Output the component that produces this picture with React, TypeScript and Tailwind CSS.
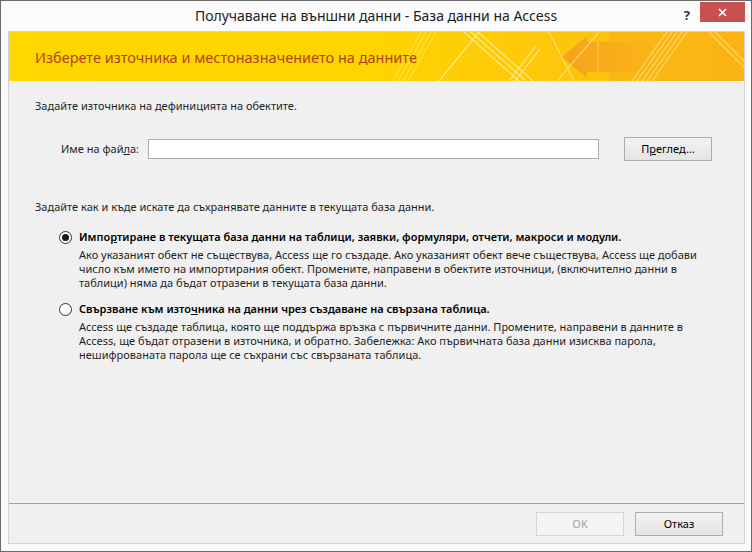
import React from "react";

const font = { fontFamily: '"Noto Sans", "Open Sans", sans-serif' };

function Banner() {
  return (
    <div className="relative h-[49px] overflow-hidden bg-gradient-to-r from-[#ffd800] via-[#ffd400] to-[#fbb813]">
      <svg
        className="absolute inset-0 h-full w-full"
        viewBox="0 0 735 49"
        preserveAspectRatio="none"
      >
        <defs>
          <linearGradient id="arrowFill" x1="0" x2="1" y1="0" y2="0">
            <stop offset="0" stopColor="#f7a21b" />
            <stop offset="1" stopColor="#fab41a" />
          </linearGradient>
        </defs>
        {/* orange band on the right */}
        <polygon points="600,0 735,0 735,49 600,49" fill="#fbb217" opacity="0.7" />
        {/* arrow */}
        <polygon points="553,25 578,4 578,10 643,10 643,40 578,40 578,46" fill="url(#arrowFill)" />
        <rect x="588" y="10" width="2" height="30" fill="#fdc830" opacity="0.7" />
        {/* light stripes */}
        <g stroke="#fff4a0" strokeWidth="1" opacity="0.55">
          <line x1="384" y1="49" x2="412" y2="0" />
          <line x1="389" y1="49" x2="417" y2="0" />
          <line x1="394" y1="49" x2="422" y2="0" />
          <line x1="399" y1="49" x2="427" y2="0" />
        </g>
        <g stroke="#fff6c0" strokeWidth="1.2" opacity="0.75">
          <line x1="455" y1="0" x2="510" y2="49" />
          <line x1="462" y1="0" x2="517" y2="49" />
          <line x1="469" y1="0" x2="524" y2="49" />
          <line x1="430" y1="49" x2="470" y2="0" />
          <line x1="500" y1="49" x2="527" y2="14" />
          <line x1="506" y1="49" x2="531" y2="17" />
        </g>
        <g stroke="#fff2a0" strokeWidth="1.2" opacity="0.6">
          <line x1="540" y1="0" x2="565" y2="49" />
          <line x1="548" y1="49" x2="590" y2="0" />
          <line x1="623" y1="49" x2="658" y2="0" />
          <line x1="628" y1="49" x2="663" y2="0" />
          <line x1="633" y1="49" x2="668" y2="0" />
          <line x1="638" y1="49" x2="673" y2="0" />
          <line x1="643" y1="49" x2="678" y2="0" />
          <line x1="700" y1="0" x2="735" y2="35" />
          <line x1="706" y1="0" x2="735" y2="29" />
        </g>
      </svg>
      <div className="relative flex h-full items-center pl-[26px] text-[14.5px] text-[#b3430d]">
        Изберете източника и местоназначението на данните
      </div>
    </div>
  );
}

function Radio({ checked }: { checked?: boolean }) {
  return (
    <span className="flex h-[13px] w-[13px] shrink-0 items-center justify-center rounded-full border border-[#333] bg-white">
      {checked && <span className="h-[7px] w-[7px] rounded-full bg-[#1a1a1a]" />}
    </span>
  );
}

function Option({
  checked,
  label,
  lines,
}: {
  checked?: boolean;
  label: React.ReactNode;
  lines: string[];
}) {
  return (
    <div className="pl-[24px]">
      <div className="flex items-center gap-[7px]">
        <Radio checked={checked} />
        <span className="font-semibold text-[#000]">{label}</span>
      </div>
      <div className="mt-[4px] pl-[20px]">
        {lines.map((l) => (
          <div key={l} className="whitespace-nowrap">
            {l}
          </div>
        ))}
      </div>
    </div>
  );
}

export default function App() {
  return (
    <div
      style={font}
      className="flex h-[552px] w-[752px] flex-col border border-[#6a6a6a] bg-[#fbfbfb] text-[11px] leading-[14px] text-[#1e1e1e]"
    >
      {/* Title bar */}
      <div className="relative flex h-[30px] shrink-0 items-center justify-center">
        <span className="text-[14px] text-[#222]">
          Получаване на външни данни - База данни на Access
        </span>
        <div className="absolute right-[6px] top-[1px] flex items-start">
          <span className="mr-[10px] mt-[6px] text-[13px] font-bold text-[#333]">?</span>
          <button className="flex h-[20px] w-[45px] items-center justify-center bg-[#c75050] text-white">
            <svg width="9" height="9" viewBox="0 0 9 9">
              <path d="M1 1 L8 8 M8 1 L1 8" stroke="#fff" strokeWidth="1.6" />
            </svg>
          </button>
        </div>
      </div>

      {/* Dialog body */}
      <div className="mb-[7px] ml-[7px] mr-[6px] flex flex-1 flex-col border border-[#d3d3d3] bg-[#f0f0f0]">
        <Banner />

        <div className="flex flex-1 flex-col pl-[26px] pr-[32px]">
          <div className="mt-[18px]">Задайте източника на дефиницията на обектите.</div>

          <div className="mt-[24px] flex items-center pl-[26px]">
            <span className="w-[87px]">
              Име на фай<span className="underline">л</span>а:
            </span>
            <div className="h-[20px] w-[451px] border border-[#abadb3] bg-white" />
            <button className="ml-[25px] h-[24px] w-[88px] border border-[#acacac] bg-gradient-to-b from-[#f2f2f2] to-[#e5e5e5] text-[#000]">
              П<span className="underline">р</span>еглед...
            </button>
          </div>

          <div className="mt-[39px]">
            Задайте как и къде искате да съхранявате данните в текущата база данни.
          </div>

          <div className="mt-[16px]">
            <Option
              checked
              label={
                <>
                  Импо<span className="underline">р</span>тиране в текущата база данни на таблици, заявки, формуляри, отчети, макроси и модули.
                </>
              }
              lines={[
                "Ако указаният обект не съществува, Access ще го създаде. Ако указаният обект вече съществува, Access ще добави",
                "число към името на импортирания обект. Промените, направени в обектите източници, (включително данни в",
                "таблици) няма да бъдат отразени в текущата база данни.",
              ]}
            />
          </div>

          <div className="mt-[12px]">
            <Option
              label={
                <>
                  Свързване към изто<span className="underline">ч</span>ника на данни чрез създаване на свързана таблица.
                </>
              }
              lines={[
                "Access ще създаде таблица, която ще поддържа връзка с първичните данни. Промените, направени в данните в",
                "Access, ще бъдат отразени в източника, и обратно. Забележка: Ако първичната база данни изисква парола,",
                "нешифрованата парола ще се съхрани със свързаната таблица.",
              ]}
            />
          </div>
        </div>

        {/* Footer */}
        <div className="flex h-[40px] shrink-0 items-center justify-end gap-[11px] border-t border-[#a0a0a0] pr-[21px]">
          <button className="h-[24px] w-[88px] border border-[#d5d5d5] bg-[#f4f4f4] text-[#a2a2a2]">
            OK
          </button>
          <button className="h-[24px] w-[88px] border border-[#acacac] bg-gradient-to-b from-[#f2f2f2] to-[#e5e5e5] text-[#000]">
            Отказ
          </button>
        </div>
      </div>
    </div>
  );
}
